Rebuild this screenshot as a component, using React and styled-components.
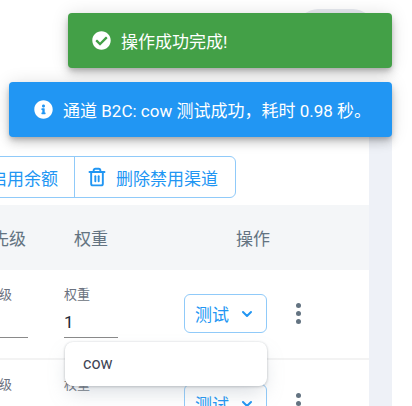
import styled, { createGlobalStyle } from 'styled-components';
import { FaCheckCircle, FaInfoCircle } from 'react-icons/fa';
import { LuChevronDown, LuTrash2 } from 'react-icons/lu';

const GlobalStyle = createGlobalStyle`
    html, body {
        margin: 0;
        height: 100%;
        overflow: hidden;
        background: #fff;
        font-family: Roboto, "Noto Sans CJK SC", sans-serif;
    }
`

const Page = styled.div`
    position: relative;
    width: 412px;
    height: 406px;
    overflow: hidden;
`

const TopBar = styled.div`
    height: 91px;
    padding: 9px 0 0 298px;
`

const Pill = styled.div`
    width: 75px;
    height: 40px;
    border-radius: 20px;
    background: #e6e9ef;
`

const Body = styled.div`
    display: flex;
    height: 306px;
    padding-right: 20px;
`

const Panel = styled.div`
    width: 369px;
    padding-top: 56px;
    overflow: hidden;
`

const Strip = styled.div`
    width: 23px;
    background: #eef1f7;
`

const Toolbar = styled.div`
    display: flex;
    height: 42px;
    margin: 0 0 7px -11px;
    width: max-content;
    border: 1px solid #90caf9;
    border-radius: 6px;
    box-sizing: border-box;
`

const ToolButton = styled.div`
    display: flex;
    align-items: center;
    gap: 9px;
    padding: 0 ${props => props.first ? 16 : 17}px 0 ${props => props.first ? 0 : 12}px;
    color: #2196f3;
    font-size: 17px;
    white-space: nowrap;
    & + & {
        border-left: 1px solid #90caf9;
    }
`

const Grid = styled.div`
    display: grid;
    grid-template-columns: 64px 84px 138px;
    column-gap: 36px;
    margin-left: -36px;
    width: 405px;
`

const HeadRow = styled(Grid)`
    height: 65px;
    align-items: center;
    background: #f4f6f8;
    color: #637381;
    font-size: 17px;
`

const HeadCell = styled.div`
    text-align: ${props => props.align || 'left'};
    padding-left: ${props => props.indent || 0}px;
    padding-right: ${props => props.end || 0}px;
    white-space: nowrap;
`

const Row = styled(Grid)`
    height: 88px;
    align-items: start;
    border-bottom: 2px solid #f3f3f3;
`

const Field = styled.div`
    width: ${props => props.width}px;
    justify-self: ${props => props.side || 'start'};
    padding-top: 16px;
`

const FieldLabel = styled.div`
    color: #6b7280;
    font-size: 13px;
    line-height: 17px;
    white-space: nowrap;
`

const FieldValue = styled.div`
    height: 35px;
    box-sizing: border-box;
    padding-top: 9px;
    border-bottom: 1px solid #8a8a8a;
    color: #212b36;
    font-size: 17px;
    line-height: 20px;
`

const Actions = styled.div`
    display: flex;
    align-items: center;
    gap: 21px;
    padding-top: 24px;
`

const TestButton = styled.div`
    display: flex;
    align-items: center;
    justify-content: space-between;
    width: 83px;
    height: 39px;
    box-sizing: border-box;
    padding: 0 11px 0 10px;
    border: 1px solid #90caf9;
    border-radius: 6px;
    color: #2196f3;
    font-size: 17px;
`

const Dots = styled.div`
    display: flex;
    flex-direction: column;
    gap: 3px;
    width: 20px;
    align-items: center;
`

const Dot = styled.span`
    width: 5px;
    height: 5px;
    border-radius: 50%;
    background: #637381;
`

const Toasts = styled.div`
    position: absolute;
    top: 13px;
    right: 20px;
    display: flex;
    flex-direction: column;
    align-items: flex-end;
    gap: 14px;
`

const Toast = styled.div`
    display: flex;
    align-items: center;
    gap: 10px;
    min-width: 324px;
    height: 55px;
    box-sizing: border-box;
    padding: 0 21px 0 ${props => props.indent}px;
    border-radius: 4px;
    background: ${props => props.color};
    color: #fff;
    font-size: 17px;
    white-space: nowrap;
    box-shadow: 0 3px 5px -1px rgba(0, 0, 0, .2), 0 6px 10px rgba(0, 0, 0, .14), 0 1px 18px rgba(0, 0, 0, .12);
`

const Menu = styled.div`
    position: absolute;
    left: 65px;
    top: 342px;
    width: 202px;
    height: 44px;
    box-sizing: border-box;
    padding-left: 18px;
    border-radius: 8px;
    background: #fff;
    color: #3f4555;
    font-size: 16px;
    line-height: 44px;
    box-shadow: 0 0 2px rgba(145, 158, 171, .3), 0 10px 20px -4px rgba(145, 158, 171, .35), 0 1px 3px rgba(0, 0, 0, .18);
`

const ChannelRow = () => (
    <Row>
        <Field width={55} side="end">
            <FieldLabel>优先级</FieldLabel>
            <FieldValue />
        </Field>
        <Field width={54}>
            <FieldLabel>权重</FieldLabel>
            <FieldValue>1</FieldValue>
        </Field>
        <Actions>
            <TestButton>
                测试
                <LuChevronDown size={16} strokeWidth={3} />
            </TestButton>
            <Dots>
                <Dot />
                <Dot />
                <Dot />
            </Dots>
        </Actions>
    </Row>
);

const App = () => {
    return (
        <Page>
            <GlobalStyle />
            <TopBar>
                <Pill />
            </TopBar>
            <Body>
                <Panel>
                    <Toolbar>
                        <ToolButton first>启用余额</ToolButton>
                        <ToolButton>
                            <LuTrash2 size={20} strokeWidth={2.3} />
                            删除禁用渠道
                        </ToolButton>
                    </Toolbar>
                    <HeadRow>
                        <HeadCell align="right" end={2}>优先级</HeadCell>
                        <HeadCell indent={10}>权重</HeadCell>
                        <HeadCell align="center">操作</HeadCell>
                    </HeadRow>
                    <ChannelRow />
                    <ChannelRow />
                </Panel>
                <Strip />
            </Body>
            <Toasts>
                <Toast color="#43a047" indent={24}>
                    <FaCheckCircle size={19} />
                    操作成功完成!
                </Toast>
                <Toast color="#2196f3" indent={25}>
                    <FaInfoCircle size={19} />
                    通道 B2C: cow 测试成功，耗时 0.98 秒。
                </Toast>
            </Toasts>
            <Menu>cow</Menu>
        </Page>
    );
};

export default App;
